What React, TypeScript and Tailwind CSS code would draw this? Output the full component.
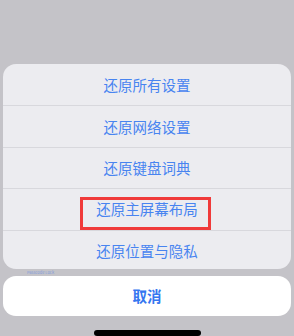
const items = ["还原所有设置", "还原网络设置", "还原键盘词典", "还原主屏幕布局", "还原位置与隐私"];

export default function App() {
  return (
    <div
      className="relative flex h-[336px] w-[294px] flex-col overflow-hidden bg-[#c4c3c8] pt-[64px]"
      style={{ fontFamily: '"Noto Sans CJK SC", "Noto Sans", sans-serif' }}
    >
      {/* Action sheet */}
      <div className="mx-[3px] overflow-hidden rounded-[13px] bg-[#ececf0]">
        {items.map((label, i) => (
          <div
            key={label}
            className={`relative flex h-[41.4px] items-center justify-center text-[14.5px] text-[#4884f0] ${i > 0 ? "border-t border-[#d8d8dd]" : ""}`}
          >
            {label}
            {i === 3 && (
              <div className="absolute left-[77px] top-[8px] h-[33px] w-[131px] border-[3px] border-[#f03a3a]" />
            )}
          </div>
        ))}
      </div>

      {/* faint text behind the sheet */}
      <span className="absolute left-[27px] top-[270px] text-[4px] leading-none text-[#6a8ee0] opacity-70">
        Passcode Lock
      </span>

      {/* Cancel */}
      <div className="mx-[3px] mt-[7px] flex h-[41px] items-center justify-center rounded-[13px] bg-white text-[14.5px] font-semibold text-[#3577f0]">
        取消
      </div>

      {/* Home indicator */}
      <div className="mx-auto mt-[14px] h-[6px] w-[107px] rounded-full bg-black" />
    </div>
  );
}
